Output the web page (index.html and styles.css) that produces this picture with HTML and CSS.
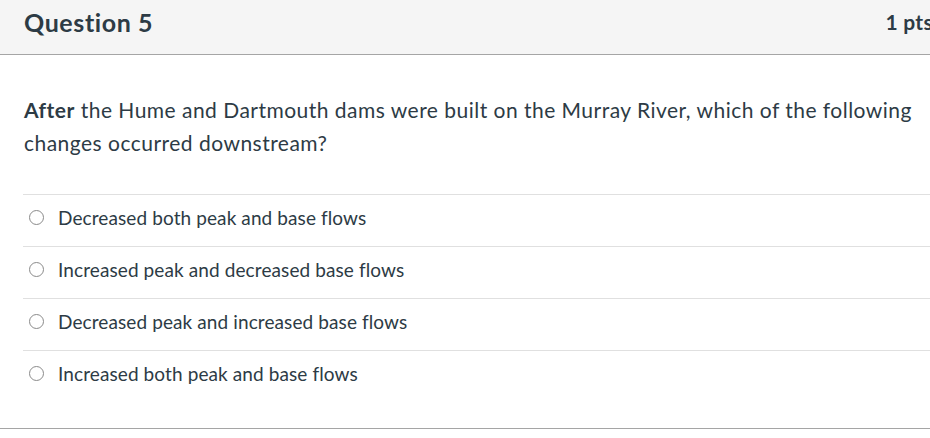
FILE: index.html
```html
<!DOCTYPE HTML>
<html>
<head>
	<meta charset="utf-8" />
	<title>Question 5</title>
	<link rel="stylesheet" href="styles.css">
</head>
<body>
	<div class="question">
		<div class="header">
			<span class="title">Question 5</span>
			<span class="points">1 pts</span>
		</div>
		<div class="content">
			<p class="text"><strong>After</strong> the Hume and Dartmouth dams were built on the Murray River, which of the following changes occurred downstream?</p>
			<ul class="answers">
				<li><span class="radio"></span>Decreased both peak and base flows</li>
				<li><span class="radio"></span>Increased peak and decreased base flows</li>
				<li><span class="radio"></span>Decreased peak and increased base flows</li>
				<li><span class="radio"></span>Increased both peak and base flows</li>
			</ul>
		</div>
	</div>
</body>
</html>
```

FILE: styles.css
```css
body {
	font-family: Lato, 'Open Sans', sans-serif;
	color: #2d3b45;
	margin: 0;
	padding: 0;
	overflow: hidden;
	background-color: #fff;
}
.question {
	width: 950px;
	border-bottom: 1px solid #a5a5a5;
}
.header {
	display: flex;
	justify-content: space-between;
	align-items: center;
	padding: 0 17px 0 24px;
	background-color: #f5f5f5;
	border-bottom: 1px solid #a5a5a5;
	box-sizing: border-box;
	height: 55px;
}
.title {
	font-size: 25px;
	font-weight: bold;
	letter-spacing: 0.6px;
	margin-top: -11px;
}
.points {
	font-size: 21px;
	font-weight: bold;
	letter-spacing: 0.3px;
	margin-top: -11px;
}
.content {
	padding: 38px 0 26px 23px;
}
.text {
	font-size: 21px;
	letter-spacing: 0.48px;
	line-height: 33px;
	margin: 0 0 35px 1px;
	padding-right: 10px;
}
.text strong {
	font-weight: bold;
}
.answers {
	list-style: none;
	margin: 0;
	padding: 0;
}
.answers > li {
	display: flex;
	align-items: center;
	height: 52px;
	box-sizing: border-box;
	border-top: 1px solid #e0e0e0;
	font-size: 19px;
	letter-spacing: 0.1px;
	padding: 0 0 7px 6px;
}
.radio {
	width: 15px;
	height: 15px;
	border: 1px solid #8a8a8a;
	border-radius: 50%;
	box-sizing: border-box;
	margin-right: 14px;
}
```
